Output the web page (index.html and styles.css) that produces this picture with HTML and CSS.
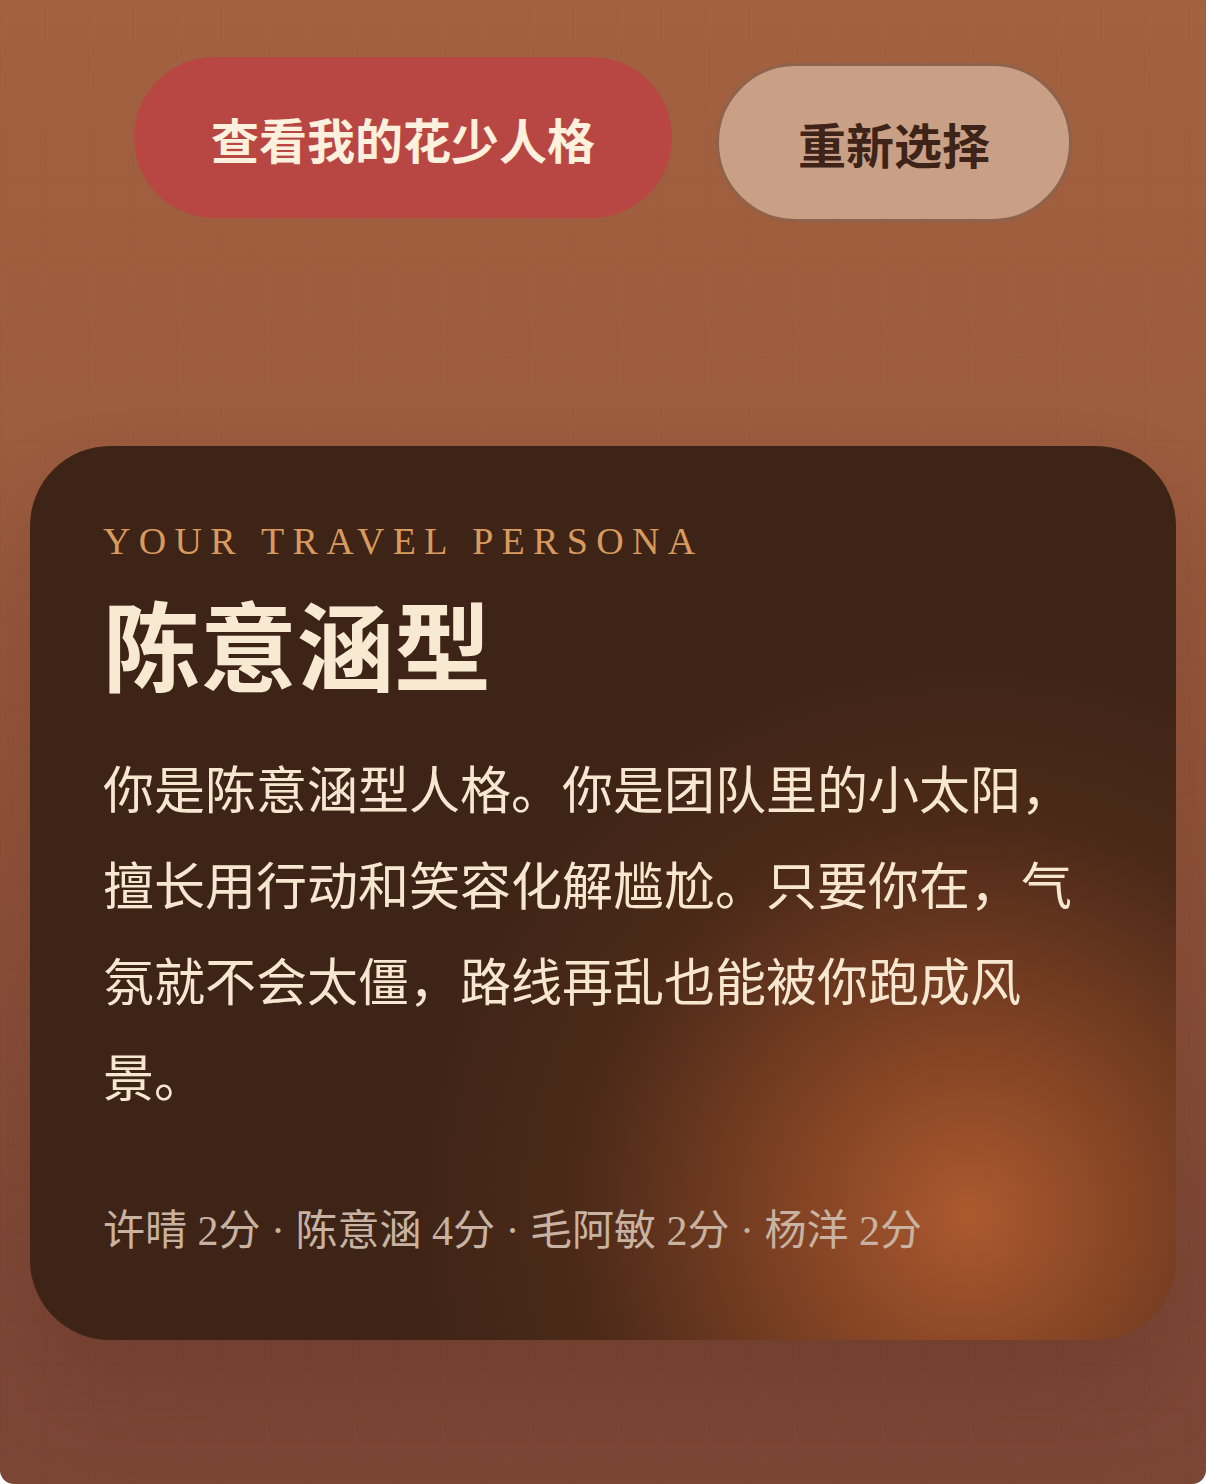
FILE: index.html
```html
<!DOCTYPE html>
<html lang="zh-CN">
<head>
    <meta charset="UTF-8">
    <meta name="viewport" content="width=device-width, initial-scale=1.0">
    <title>花少人格</title>
    <link rel="stylesheet" href="styles.css">
</head>

<body>
    <div class="page">
        <!-- 操作按钮 -->
        <div class="actions">
            <button type="button" class="btn btn-primary">查看我的花少人格</button>
            <button type="button" class="btn btn-ghost">重新选择</button>
        </div>

        <!-- 结果卡片 -->
        <section class="result-card">
            <p class="eyebrow">YOUR TRAVEL PERSONA</p>
            <h1 class="persona-name">陈意涵型</h1>
            <p class="persona-desc">你是陈意涵型人格。你是团队里的小太阳，擅长用行动和笑容化解尴尬。只要你在，气氛就不会太僵，路线再乱也能被你跑成风景。</p>
            <p class="scores">许晴 2分 · 陈意涵 4分 · 毛阿敏 2分 · 杨洋 2分</p>
        </section>
    </div>
</body>
</html>
```

FILE: styles.css
```css
* { box-sizing: border-box; }
html, body { margin: 0; padding: 0; background: #ffffff; }

.page {
    min-height: 1484px;
    border-radius: 0 0 14px 14px;
    overflow: hidden;
    font-family: "Noto Sans CJK SC", sans-serif;
    background:
        linear-gradient(rgba(0,0,0,0.025) 1px, transparent 1px) 0 0 / 44px 44px,
        linear-gradient(90deg, rgba(0,0,0,0.025) 1px, transparent 1px) 0 0 / 44px 44px,
        linear-gradient(180deg, #a2613f 0%, #9c5c3e 30%, #8e5139 60%, #7f4836 85%, #7c4635 100%);
}

/* 按钮 */
.actions {
    display: flex;
    justify-content: center;
    align-items: center;
    gap: 44px;
    padding-top: 62px;
}
.btn {
    height: 161px;
    border-radius: 81px;
    font-family: "Noto Sans CJK SC", sans-serif;
    font-size: 48px;
    font-weight: 700;
    cursor: pointer;
}
.btn-primary {
    padding: 0 77px;
    background: #b84744;
    color: #fdf0dc;
    border: none;
    transform: translateY(-5px);
}
.btn-ghost {
    height: 159px;
    padding: 0 79px;
    background: #c9a085;
    color: #3e2418;
    border: 3px solid #8e624b;
}

/* 结果卡片 */
.result-card {
    position: relative;
    margin: 223px 30px 0;
    padding: 76px 73px 81px;
    border-radius: 80px;
    background:
        radial-gradient(circle at 82% 86%, rgba(178, 92, 48, 0.95) 0%, rgba(150, 76, 40, 0.75) 15%, rgba(100, 52, 30, 0.38) 32%, rgba(62, 36, 22, 0) 47%),
        #3e2416;
    box-shadow: 0 50px 90px rgba(60, 30, 20, 0.18);
}
.eyebrow {
    margin: 0;
    font-family: "Liberation Serif", serif;
    font-size: 38px;
    line-height: 1;
    letter-spacing: 8.3px;
    color: #d99a5e;
}
.persona-name {
    margin: 33px 0 0;
    font-size: 97px;
    line-height: 1;
    font-weight: 700;
    color: #f8e9d2;
}
.persona-desc {
    margin: 49px 0 0;
    font-size: 51px;
    line-height: 96px;
    color: #f7e7d0;
}
.scores {
    margin: 80px 0 0;
    font-family: "Liberation Serif", "Noto Sans CJK SC", serif;
    font-size: 42px;
    line-height: 56px;
    color: #c8b2a2;
}
```
